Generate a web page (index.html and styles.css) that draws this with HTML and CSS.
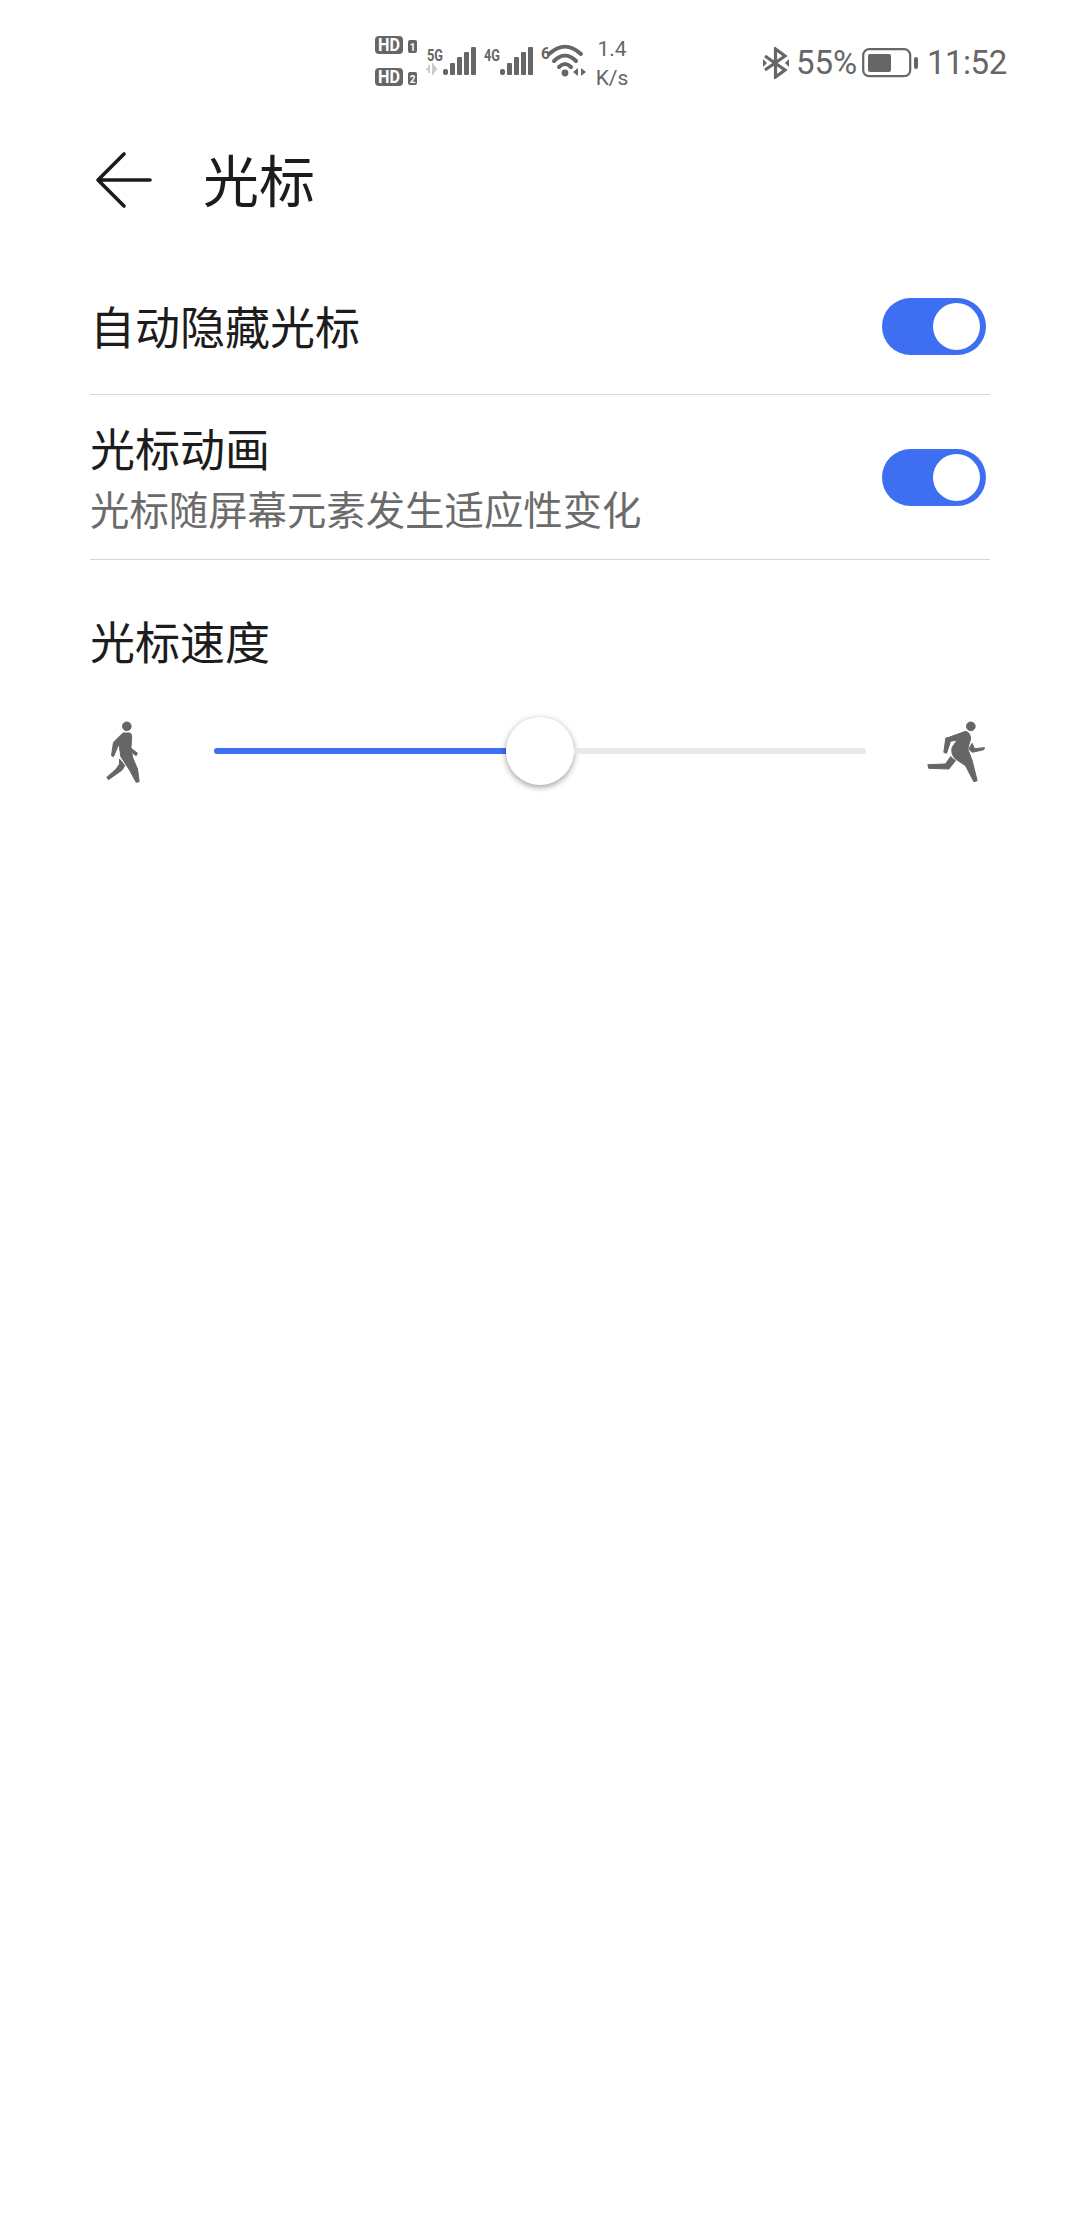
FILE: index.html
```html
<!DOCTYPE html>
<html lang="zh">
<head>
<meta charset="utf-8">
<title>光标</title>
<link rel="stylesheet" href="styles.css">
</head>
<body>
<div class="status">
  <svg class="sig" width="270" height="60" viewBox="0 0 270 60">
    <rect x="1" y="2" width="28" height="18" rx="4" fill="#666"/>
    <text x="4" y="17" class="t-hd" textLength="22" lengthAdjust="spacingAndGlyphs">HD</text>
    <rect x="34" y="6" width="9" height="13" rx="2" fill="#666"/>
    <text x="38.5" y="16.5" class="t-n">1</text>
    <rect x="1" y="34" width="28" height="18" rx="4" fill="#666"/>
    <text x="4" y="49" class="t-hd" textLength="22" lengthAdjust="spacingAndGlyphs">HD</text>
    <rect x="34" y="38" width="9" height="13" rx="2" fill="#666"/>
    <text x="38.5" y="48.5" class="t-n">2</text>
    <text x="53" y="27" class="t-g" textLength="16" lengthAdjust="spacingAndGlyphs">5G</text>
    <path d="M55 31v8M52 35h3M59 31v8l3-4z" stroke="#ccc" stroke-width="2" fill="#ccc"/>
    <g fill="#666">
      <rect x="69" y="35" width="5" height="6" rx="2"/><rect x="76" y="29" width="5" height="12" rx="1"/><rect x="83" y="23" width="5" height="18" rx="1"/><rect x="90" y="18" width="5" height="23" rx="1"/><rect x="97" y="13" width="5" height="28" rx="1"/>
    </g>
    <text x="110" y="27" class="t-g" textLength="16" lengthAdjust="spacingAndGlyphs">4G</text>
    <g fill="#666">
      <rect x="126" y="35" width="5" height="6" rx="2"/><rect x="133" y="29" width="5" height="12" rx="1"/><rect x="140" y="23" width="5" height="18" rx="1"/><rect x="147" y="18" width="5" height="23" rx="1"/><rect x="154" y="13" width="5" height="28" rx="1"/>
    </g>
    <text x="167" y="25" class="t-g" textLength="9" lengthAdjust="spacingAndGlyphs">6</text>
    <path d="M175 20C186 10 196 10 207 20M180 27C187 20 195 20 202 27M185 33C189 29 193 29 197 33" fill="none" stroke="#666" stroke-width="4" stroke-linecap="round"/>
    <circle cx="191" cy="39" r="3.400" fill="#666"/>
    <path d="M204 34v8l-5-4zM207 34v8l5-4z" fill="#666"/>
  </svg>
  <div class="speed"><span>1.4</span><span>K/s</span></div>
  <svg class="bt" width="26" height="32" viewBox="0 0 26 32">
    <path d="M2 9L22 23L12.500 30V2L22 9L2 23" fill="none" stroke="#666" stroke-width="3.200"/>
    <path d="M0 12l4 4-4 4zM26 12l-4 4 4 4z" fill="#666"/>
  </svg>
  <span class="pct">55%</span>
  <svg class="batt" width="57" height="30" viewBox="0 0 57 30">
    <rect x="1.200" y="1.200" width="47" height="27" rx="6" fill="none" stroke="#666" stroke-width="2.200"/>
    <rect x="6" y="6" width="23" height="18" rx="2" fill="#666"/>
    <rect x="52" y="9" width="4" height="12" rx="2" fill="#666"/>
  </svg>
  <span class="time">11:52</span>
</div>

<header class="bar">
  <svg class="back" width="58" height="58" viewBox="0 0 58 58">
    <path d="M30 3L4 29L30 55M4 29H56" fill="none" stroke="#1a1a1a" stroke-width="3.600" stroke-linecap="round" stroke-linejoin="round"/>
  </svg>
  <h1 class="title">光标</h1>
</header>

<main class="list">
  <div class="row row-a">
    <div class="label">自动隐藏光标</div>
    <div class="switch"><i class="knob"></i></div>
  </div>
  <div class="row row-b">
    <div class="row-text">
      <div class="label">光标动画</div>
      <div class="sub">光标随屏幕元素发生适应性变化</div>
    </div>
    <div class="switch"><i class="knob"></i></div>
  </div>
  <div class="speed-title label">光标速度</div>
  <div class="slider-row">
    <svg class="walk" width="37" height="65" viewBox="75 55 110 195">
      <g fill="#666" stroke="#666" stroke-width="3" stroke-linejoin="round">
        <circle cx="140" cy="77" r="13"/>
        <path d="M128 97L150 97Q156 100 154 118L152 145L158 172L172 205L177 243L168 245L148 208L122 168L118 140Q116 120 128 97z"/>
        <path d="M125 100L100 125L94 165L100 168L112 140L125 120z"/>
        <path d="M153 143L172 158L168 165L150 152z"/>
        <path d="M118 175L134 195L125 209L85 237L80 230L108 205L118 190z"/>
      </g>
    </svg>
    <div class="track">
      <div class="fill"></div>
      <div class="thumb"></div>
      <div class="rest"></div>
    </div>
    <svg class="run" width="59" height="65" viewBox="78 55 177 195">
      <g fill="#666" stroke="#666" stroke-width="3" stroke-linejoin="round">
        <circle cx="211" cy="77" r="13"/>
        <path d="M145 110L195 92Q210 95 210 115L202 145L215 180L230 240L220 243L195 195L165 175Q150 160 155 140L170 118L150 122L138 158L130 155L136 112z"/>
        <path d="M215 128L205 145L215 155L250 147L252 141L222 144z"/>
        <path d="M150 168L165 180L145 205L85 203L82 192L135 190z"/>
      </g>
    </svg>
  </div>
</main>
</body>
</html>
```

FILE: styles.css
```css
* { box-sizing: border-box; }
html, body { margin: 0; padding: 0; background: #fff; }
body {
  width: 1080px;
  height: 2228px;
  overflow: hidden;
  font-family: "Noto Sans CJK SC", "Noto Sans", sans-serif;
  color: #1c1c1c;
}
.status {
  height: 124px;
  display: flex;
  align-items: center;
  padding-left: 374px;
  color: #666;
  font-family: Roboto, "Liberation Sans", sans-serif;
}
.sig { display: block; margin-top: 4px; }
.t-hd { font: 700 18px Roboto, sans-serif; fill: #fff; }
.t-n { font: 700 10px Roboto, sans-serif; fill: #fff; text-anchor: middle; }
.t-g { font: 700 17px Roboto, sans-serif; fill: #666; }
.speed {
  margin-left: -52px;
  width: 40px;
  display: flex;
  flex-direction: column;
  align-items: center;
  gap: 5px;
  margin-top: 2px;
  font-size: 21px;
  line-height: 24px;
  font-weight: 400;
}
.bt { margin-left: 131px; margin-top: 2px; }
.pct { margin-left: 7px; font-size: 33px; line-height: 40px; width: 60px; margin-top: 2px; }
.batt { margin-left: 6px; margin-top: 2px; }
.time { margin-left: 8px; font-size: 33px; line-height: 40px; letter-spacing: -.5px; margin-top: 2px; }

.bar {
  height: 112px;
  display: flex;
  align-items: center;
  padding-left: 94px;
  gap: 51px;
}
.back { display: block; }
.title { margin: 0; font-size: 56px; font-weight: 400; line-height: 76px; margin-top: -5px; }

.list { padding: 0 90px; }
.row {
  display: flex;
  align-items: center;
  justify-content: space-between;
  border-bottom: 1.500px solid #d6d6d6;
  padding-right: 4px;
}
.row-a { height: 159px; padding-top: 22px; }
.row-b { height: 165px; }
.row-text { display: flex; flex-direction: column; gap: 4px; padding-bottom: 4px; }
.label { font-size: 45px; line-height: 62px; }
.sub { font-size: 39.400px; line-height: 50px; color: #6b6b6b; }
.switch {
  width: 104px;
  height: 57px;
  border-radius: 29px;
  background: #3e6ff2;
  display: flex;
  align-items: center;
  justify-content: flex-end;
  padding-right: 6px;
}
.knob {
  display: block;
  width: 47px;
  height: 47px;
  border-radius: 50%;
  background: #fff;
}
.speed-title { margin-top: 50px; }
.slider-row {
  margin-top: 44px;
  height: 70px;
  display: flex;
  align-items: center;
  padding-left: 15px;
}
.walk { display: block; }
.track {
  margin-left: 72px;
  width: 652px;
  height: 68px;
  display: flex;
  align-items: center;
}
.fill { width: 292px; height: 6px; background: #3e6ff2; border-radius: 3px 0 0 3px; }
.thumb {
  width: 68px;
  height: 68px;
  flex: none;
  border-radius: 50%;
  background: #fff;
  box-shadow: 0 2px 6px rgba(0,0,0,.4);
}
.rest { flex: 1; height: 6px; background: #e8e8e8; border-radius: 0 3px 3px 0; }
.run { display: block; margin-left: 59px; width: 62px; }
```
